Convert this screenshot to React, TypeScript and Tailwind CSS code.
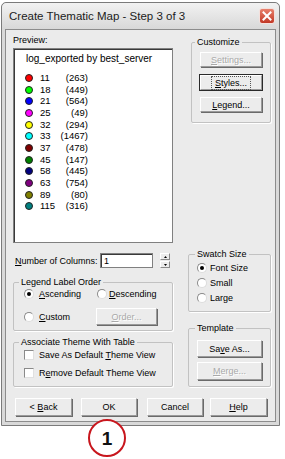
import { FC, ReactNode } from "react";

const legendRows = [
  { color: "#ff0000", value: "11", count: "(263)" },
  { color: "#00ff00", value: "18", count: "(449)" },
  { color: "#0000ff", value: "21", count: "(564)" },
  { color: "#ff00ff", value: "25", count: "(49)" },
  { color: "#ffff00", value: "32", count: "(294)" },
  { color: "#00ffff", value: "33", count: "(1467)" },
  { color: "#800000", value: "37", count: "(478)" },
  { color: "#008000", value: "45", count: "(147)" },
  { color: "#000080", value: "58", count: "(445)" },
  { color: "#800080", value: "63", count: "(754)" },
  { color: "#808000", value: "89", count: "(80)" },
  { color: "#008080", value: "115", count: "(316)" },
];

const Button: FC<{ className?: string; disabled?: boolean; focused?: boolean; children: ReactNode }> = ({
  className = "",
  disabled,
  focused,
  children,
}) => (
  <div
    className={`flex items-center justify-center bg-[#ececec] border border-t-[#ffffff] border-l-[#ffffff] border-r-[#9a9a9a] border-b-[#9a9a9a] ${
      focused ? "outline outline-1 outline-[#2a2a2a]" : "shadow-[1px_1px_0_#6a6a6a]"
    } ${disabled ? "text-[#a9a9a9] [text-shadow:1px_1px_0_#ffffff]" : "text-black"} ${className}`}
  >
    {focused ? (
      <span className="px-[3px] border border-dotted border-[#555]">{children}</span>
    ) : (
      children
    )}
  </div>
);

const Radio: FC<{ checked?: boolean }> = ({ checked }) => (
  <span className="w-[10px] h-[10px] shrink-0 rounded-full bg-white border border-t-[#8a8a8a] border-l-[#8a8a8a] border-r-[#dcdcdc] border-b-[#dcdcdc] flex items-center justify-center">
    {checked && <span className="w-[4px] h-[4px] rounded-full bg-black" />}
  </span>
);

const Check: FC = () => (
  <span className="w-[10px] h-[10px] shrink-0 bg-white border border-t-[#8a8a8a] border-l-[#8a8a8a] border-r-[#e0e0e0] border-b-[#e0e0e0]" />
);

const App: FC = () => {
  return (
    <div className="w-[285px] h-[459px] bg-white relative font-['Liberation_Sans',Arial,sans-serif] text-[9px] leading-[12px] text-black">
      <div className="ml-[1px] mt-[2px] w-[279px] h-[424px] flex flex-col border border-[#7b7b7b] rounded-t-[5px] bg-[#d9d9d9]">
        {/* title bar */}
        <div className="h-[26px] shrink-0 flex items-center justify-between pl-[7px] pr-[4px] rounded-t-[5px] bg-gradient-to-b from-[#f2f2f2] to-[#d8d8d8]">
          <span className="text-[11.5px] leading-[14px] text-[#1c1c1c]">Create Thematic Map - Step 3 of 3</span>
          <div className="w-[16px] h-[16px] rounded-[3px] border border-[#f4e0dc] bg-gradient-to-b from-[#e8806c] to-[#c13624] flex items-center justify-center">
            <svg width="10" height="10" viewBox="0 0 10 10">
              <path d="M1.5 1.5 L8.5 8.5 M8.5 1.5 L1.5 8.5" stroke="#ffffff" strokeWidth="2" strokeLinecap="square" />
            </svg>
          </div>
        </div>

        {/* body */}
        <div className="mx-[3px] mb-[3px] flex-1 border border-[#8c8c8c] bg-[#ebebeb] flex flex-col pl-[7px] pr-[4px]">
          <div className="flex">
            {/* left column */}
            <div className="w-[160px] flex flex-col">
              <div className="mt-[4px] h-[12px]">Preview:</div>
              <div className="mt-[2px] h-[195px] bg-white border border-[#808080] shadow-[inset_1px_1px_0_#3a3a3a]">
                <div className="ml-[12px] mt-[4px] text-[10px] leading-[12px]">log_exported by best_server</div>
                <div className="mt-[7px] flex flex-col text-[9.5px]">
                  {legendRows.map((r) => (
                    <div key={r.value} className="h-[11.7px] flex items-center">
                      <span
                        className="ml-[11px] w-[8px] h-[8px] rounded-full border border-[#222]"
                        style={{ backgroundColor: r.color }}
                      />
                      <span className="ml-[7px] w-[20px]">{r.value}</span>
                      <span className="w-[28px] text-right">{r.count}</span>
                    </div>
                  ))}
                </div>
              </div>

              <div className="mt-[10px] h-[15px] flex items-center">
                <span className="pl-[2px] w-[87px]">
                  <u>N</u>umber of Columns:
                </span>
                <div className="w-[53px] h-[15px] bg-white border border-[#808080] shadow-[inset_1px_1px_0_#3a3a3a] pl-[3px] flex items-center">
                  1
                </div>
                <div className="ml-[7px] w-[10px] h-[15px] flex flex-col gap-[1px]">
                  <div className="h-[7px] bg-[#ececec] border border-t-white border-l-white border-r-[#8a8a8a] border-b-[#8a8a8a] flex items-center justify-center">
                    <svg width="3" height="2" viewBox="0 0 3 2">
                      <path d="M1.5 0 L3 2 L0 2 Z" fill="#000" />
                    </svg>
                  </div>
                  <div className="h-[7px] bg-[#ececec] border border-t-white border-l-white border-r-[#8a8a8a] border-b-[#8a8a8a] flex items-center justify-center">
                    <svg width="3" height="2" viewBox="0 0 3 2">
                      <path d="M0 0 L3 0 L1.5 2 Z" fill="#000" />
                    </svg>
                  </div>
                </div>
              </div>

              <fieldset className="mt-[8px] border border-[#c2c2c2] rounded-[2px] px-[10px] pb-[5px] shadow-[1px_1px_0_#ffffff]">
                <legend className="ml-[-5px] px-[2px]">Legend Label Order</legend>
                <div className="h-[12px] flex items-center">
                  <div className="w-[73px] flex items-center gap-[5px]">
                    <Radio checked />
                    <span>
                      <u>A</u>scending
                    </span>
                  </div>
                  <div className="flex items-center gap-[2px]">
                    <Radio />
                    <span>
                      <u>D</u>escending
                    </span>
                  </div>
                </div>
                <div className="mt-[8px] h-[17px] flex items-center">
                  <div className="w-[72px] flex items-center gap-[5px]">
                    <Radio />
                    <span>
                      <u>C</u>ustom
                    </span>
                  </div>
                  <Button disabled className="w-[61px] h-[17px]">
                    <span>
                      <u>O</u>rder...
                    </span>
                  </Button>
                </div>
              </fieldset>

              <fieldset className="mt-[5px] border border-[#c2c2c2] rounded-[2px] px-[10px] pb-[7px] shadow-[1px_1px_0_#ffffff]">
                <legend className="ml-[-5px] px-[2px]">Associate Theme With Table</legend>
                <div className="mt-[1px] h-[12px] flex items-center gap-[5px]">
                  <Check />
                  <span>
                    Save As Default <u>T</u>heme View
                  </span>
                </div>
                <div className="mt-[6px] h-[12px] flex items-center gap-[5px]">
                  <Check />
                  <span>
                    R<u>e</u>move Default Theme View
                  </span>
                </div>
              </fieldset>
            </div>

            {/* right column */}
            <div className="ml-[15px] w-[83px] flex flex-col">
              <fieldset className="mt-[6px] ml-[3px] border border-[#c2c2c2] rounded-[2px] pl-[8px] pb-[10px] shadow-[1px_1px_0_#ffffff]">
                <legend className="ml-[-5px] px-[2px]">Customize</legend>
                <Button disabled className="mt-[4px] w-[62px] h-[15px]">
                  <span>
                    <u>S</u>ettings...
                  </span>
                </Button>
                <Button focused className="mt-[8px] w-[62px] h-[15px]">
                  <span>
                    <u>S</u>tyles...
                  </span>
                </Button>
                <Button className="mt-[7px] w-[62px] h-[15px]">
                  <span>
                    <u>L</u>egend...
                  </span>
                </Button>
              </fieldset>

              <fieldset className="mt-auto border border-[#c2c2c2] rounded-[2px] pl-[8px] pb-[6px] shadow-[1px_1px_0_#ffffff]">
                <legend className="ml-[-2px] px-[2px]">Swatch Size</legend>
                <div className="h-[15px] flex items-center gap-[3px]">
                  <Radio checked />
                  <span>Font Size</span>
                </div>
                <div className="h-[15px] flex items-center gap-[3px]">
                  <Radio />
                  <span>Small</span>
                </div>
                <div className="h-[15px] flex items-center gap-[3px]">
                  <Radio />
                  <span>Large</span>
                </div>
              </fieldset>

              <fieldset className="mt-[10px] border border-[#c2c2c2] rounded-[2px] pl-[8px] pb-[6px] shadow-[1px_1px_0_#ffffff]">
                <legend className="ml-[-2px] px-[2px]">Template</legend>
                <Button className="mt-[6px] w-[65px] h-[17px]">
                  <span>
                    Sa<u>v</u>e As...
                  </span>
                </Button>
                <Button disabled className="mt-[5px] w-[65px] h-[18px]">
                  <span>
                    <u>M</u>erge...
                  </span>
                </Button>
              </fieldset>
            </div>
          </div>

          {/* bottom buttons */}
          <div className="mt-[11px] ml-[2px] h-[18px] flex">
            <Button className="w-[57px] h-[18px]">
              <span>
                &lt; <u>B</u>ack
              </span>
            </Button>
            <Button className="ml-[9px] w-[56px] h-[18px]">OK</Button>
            <Button className="ml-[10px] w-[56px] h-[18px]">Cancel</Button>
            <Button className="ml-[7px] w-[57px] h-[18px]">
              <span>
                <u>H</u>elp
              </span>
            </Button>
          </div>
        </div>
      </div>

      {/* step annotation */}
      <div className="absolute left-[88px] top-[417px] w-[38px] h-[38px] rounded-full border-2 border-[#c8161d] bg-white flex items-center justify-center text-[19px] leading-none font-bold text-[#111] font-['Liberation_Sans',Arial,sans-serif]">
        1
      </div>
    </div>
  );
};

export default App;
